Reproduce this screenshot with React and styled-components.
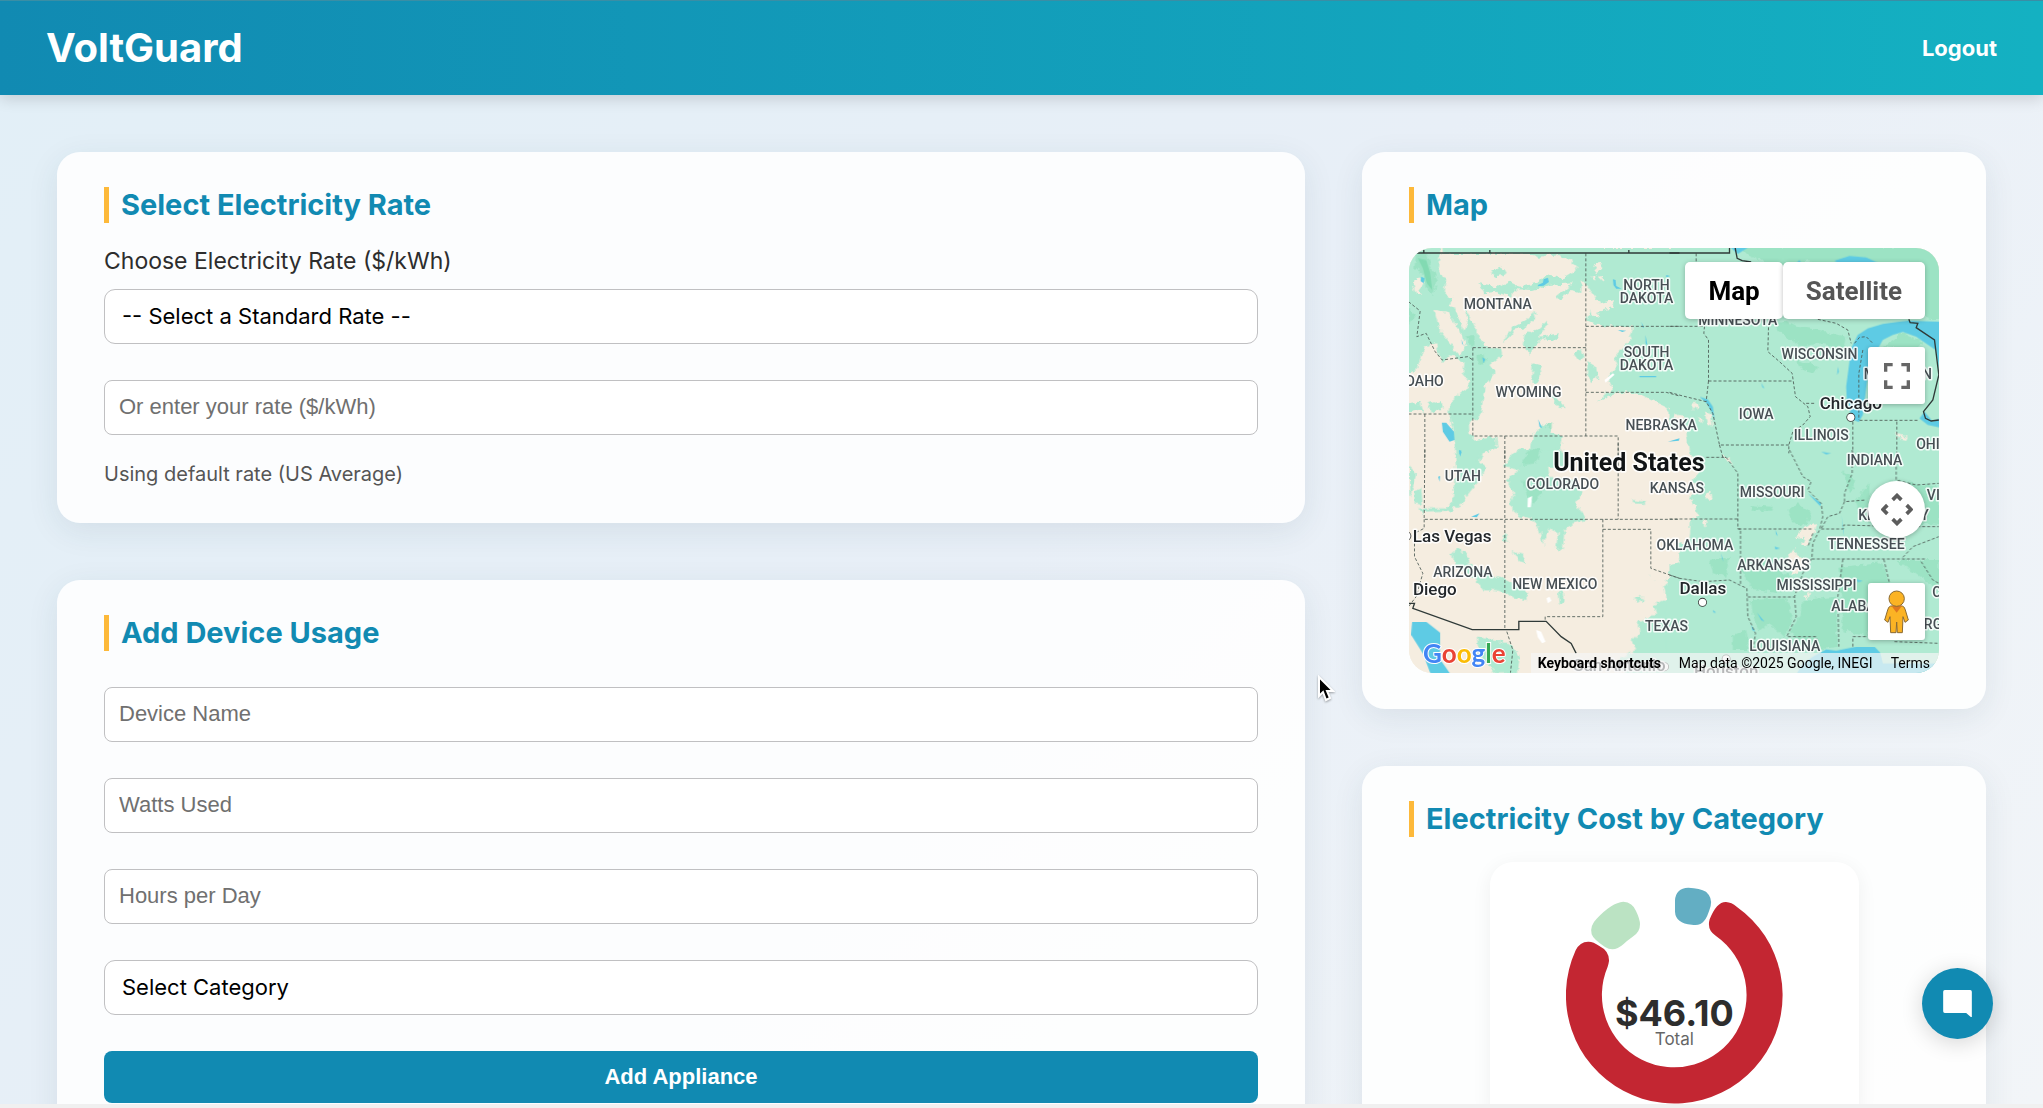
import React from 'react';
import styled, { createGlobalStyle, css } from 'styled-components';

const BLUE = '#118ab2';
const YELLOW = '#fdb93a';

const GlobalStyle = createGlobalStyle`
  * {
    box-sizing: border-box;
  }
  body {
    margin: 0;
    color: #2d2d2d;
    font-family: Inter, sans-serif;
  }
  h1, h2, p {
    margin: 0;
  }
`;

const Page = styled.div`
  display: flex;
  flex-direction: column;
  height: 100vh;
  overflow: hidden;
  border-bottom: 4px solid #f0f0f0;
  background: linear-gradient(135deg, #e2eff7 0%, #e8eff7 50%, #f2f5f8 100%);
`;

const Header = styled.header`
  display: flex;
  flex: none;
  align-items: center;
  justify-content: space-between;
  height: 95px;
  padding: 0 46px;
  border-top: 1px solid #3a8ea5;
  background: linear-gradient(90deg, ${BLUE}, #14b1c2);
  box-shadow: 0 4px 14px rgba(0, 0, 0, 0.14);
  color: #fff;
`;

const Logo = styled.h1`
  font-size: 40px;
  font-weight: 700;
  line-height: 50px;
`;

const LogoutLink = styled.a`
  color: #fff;
  font-size: 22px;
  font-weight: 700;
  text-decoration: none;
`;

const Dashboard = styled.main`
  display: grid;
  flex: 1;
  grid-template-columns: minmax(0, 2fr) minmax(0, 1fr);
  gap: 57px;
  min-height: 0;
  padding: 57px;
`;

const Column = styled.div`
  display: flex;
  flex-direction: column;
  gap: 57px;
`;

const Card = styled.section`
  flex: none;
  padding: 35px 47px 36px;
  border-radius: 23px;
  background: rgba(255, 255, 255, 0.87);
  box-shadow: 0 8px 32px rgba(30, 70, 80, 0.09);
`;

const CardTitle = styled.h2`
  margin-bottom: 25px;
  padding-left: 12px;
  border-left: 5px solid ${YELLOW};
  color: ${BLUE};
  font-size: 29px;
  font-weight: 700;
  line-height: 36px;
`;

const Label = styled.label`
  display: block;
  margin-bottom: 14px;
  font-size: 23px;
  line-height: 27px;
`;

const field = css`
  display: block;
  width: 100%;
  height: 55px;
  border: 1px solid #c0c0c2;
  background: #fff;
  font-size: 22px;
`;

const Input = styled.input`
  ${field}
  padding: 0 14px 2px;
  border-radius: 8px;
  font-family: "Liberation Sans", Arial, sans-serif;

  &::placeholder {
    color: #707070;
  }
`;

const Select = styled.select`
  ${field}
  padding: 0 17px 2px;
  border-radius: 11px;
  color: #000;
  font-family: Inter, sans-serif;
  appearance: none;
`;

const Fields = styled.div`
  display: flex;
  flex-direction: column;
  gap: 36px;
`;

const Form = styled.form`
  display: flex;
  flex-direction: column;
  gap: 36px;
  padding-top: 11px;
`;

const Hint = styled.p`
  margin-top: 26px;
  color: #555;
  font-size: 20px;
  line-height: 26px;
`;

const SubmitButton = styled.button`
  height: 52px;
  border: 0;
  border-radius: 8px;
  background: ${BLUE};
  color: #fff;
  font-family: "Liberation Sans", Arial, sans-serif;
  font-size: 22px;
  font-weight: 700;
`;

const MapFrame = styled.div`
  position: relative;
  height: 425px;
  overflow: hidden;
  border-radius: 23px;
  background: #f5ede0;
  font-family: Roboto, sans-serif;
`;

const MapDrawing = styled.svg`
  display: block;
  width: 100%;
  height: 100%;
`;

const MapTypes = styled.div`
  position: absolute;
  top: 14px;
  right: 14px;
  display: flex;
`;

const MapTypeButton = styled.button`
  height: 57px;
  padding: 0 23px;
  border: 0;
  border-radius: 5px;
  background: #fff;
  box-shadow: 0 1px 5px rgba(0, 0, 0, 0.25);
  color: ${props => (props.$active ? '#000' : '#565656')};
  font-family: Roboto, sans-serif;
  font-size: 26px;
  font-weight: 700;
`;

const MapControl = styled.button`
  position: absolute;
  top: ${props => props.$top}px;
  right: 14px;
  display: flex;
  align-items: center;
  justify-content: center;
  width: 57px;
  height: 57px;
  padding: 0;
  border: 0;
  border-radius: ${props => (props.$round ? '50%' : '3px')};
  background: #fff;
  box-shadow: 0 1px 5px rgba(0, 0, 0, 0.28);
`;

const GoogleLogo = styled.a`
  position: absolute;
  bottom: 3px;
  left: 14px;
  font-family: Lato, sans-serif;
  font-size: 26px;
  font-weight: 700;
  line-height: 33px;
  text-decoration: none;
  -webkit-text-stroke: 2px #fff;
  paint-order: stroke fill;
`;

const Letter = styled.span`
  color: ${props => props.$color};
`;

const Attribution = styled.div`
  position: absolute;
  right: 0;
  bottom: 0;
  display: flex;
  gap: 18px;
  height: 20px;
  padding: 0 9px 0 7px;
  background: rgba(245, 245, 245, 0.7);
  color: #000;
  font-size: 14px;
  line-height: 20px;
  white-space: nowrap;
`;

const ShortcutsButton = styled.button`
  padding: 0;
  border: 0;
  background: none;
  color: #000;
  font-family: Roboto, sans-serif;
  font-size: 14px;
  font-weight: 700;
`;

const TermsLink = styled.a`
  color: #000;
  text-decoration: none;
`;

const ChartCard = styled.div`
  display: flex;
  justify-content: center;
  width: 369px;
  max-width: 100%;
  margin: 0 auto;
  padding: 25px;
  border-radius: 23px;
  background: #fff;
  box-shadow: 0 4px 20px rgba(0, 0, 0, 0.06);
`;

const ChatButton = styled.button`
  position: fixed;
  right: 50px;
  bottom: 69px;
  display: flex;
  align-items: center;
  justify-content: center;
  width: 71px;
  height: 71px;
  padding: 0;
  border: 0;
  border-radius: 50%;
  background: ${BLUE};
  box-shadow: 0 4px 22px rgba(0, 0, 0, 0.16);
`;

const Pointer = styled.svg`
  position: fixed;
  top: 675px;
  left: 1317px;
  filter: drop-shadow(0 1px 1px rgba(0, 0, 0, 0.35));
  pointer-events: none;
`;

// The map is drawn in four tiles, each with its own origin
const NW = 'translate(-27 -24)';
const NE = 'translate(783 -24)';
const SW = 'translate(-27 606)';
const SE = 'translate(783 606)';

const FOREST = '#b0ead2';
const WOODS = '#99e2c2';
const DESERT = '#f5ede0';
const WATER = '#5ecbe4';

const LAND = [
  {
    tile: NW,
    fill: FOREST,
    paths: [
      'M0 0H128L115 85 140 125 135 165 160 175 150 195 195 205 212 230 240 290 260 322 305 330 308 345 270 375 288 400 255 440 245 520 225 540 208 545 210 580 230 600 290 590 295 625 250 640 235 690H170L165 600 150 520 155 480 205 440 215 420 190 405 195 370 150 345 130 370 110 310 75 320 50 390 0 410Z',
      'M128 0H580V38L500 60 480 42 420 50 400 42 130 42Z',
      'M515 24H860V560L800 500 720 462 660 455 595 485 640 445 625 415 655 380 645 350 690 300 700 262 600 258 560 240 575 200 600 190 570 150 545 110 515 60Z',
      'M275 95L300 80 318 90 310 108 285 112Z',
      'M240 130L300 140 330 125 360 140 410 130 440 105 490 115 530 90 535 70 550 90 545 160 520 150 480 180 470 170 520 130 450 135 400 150 350 148 330 170 290 155 255 160Z',
      'M310 310L340 260 380 240 405 215 410 235 370 265 345 270 330 290Z',
      'M370 310L375 285 420 265 445 240 440 262 420 290 480 280 475 300 430 295 400 325 392 345Z',
      'M400 370L420 375 425 395 410 430 395 425Z',
      'M445 460L465 465 495 500 480 505Z',
      'M523 340L545 330 555 350 540 362Z',
      'M565 365L590 380 595 410 575 430 562 410Z',
      'M27 490L60 485 70 520 50 510 27 515ZM85 490L125 480 130 505 95 520Z',
      'M400 590L430 550 455 560 450 580 490 590 485 620 510 680H345L360 630 395 625Z',
    ],
  },
  {
    tile: NE,
    fill: FOREST,
    paths: ['M0 0H830V690H0Z'],
  },
  {
    tile: SW,
    fill: FOREST,
    paths: [
      'M178 -10H255L230 30 260 50 240 90 200 140 190 160 150 185 70 188 55 175 140 175 160 150 165 90 185 60Z',
      'M27 50L50 70 45 100 30 140ZM45 125L65 115 70 165 45 160Z',
      'M350 0H480L445 40 450 80 520 90 550 130 530 160 560 210 520 220 495 240 490 300 470 295 475 250 450 235 430 285 420 240 400 210 350 195 330 160 345 130 320 90 360 60 310 50Z',
      'M155 310L175 295 210 320 205 340 280 375 380 415 385 450 350 445 300 425 250 420 230 390 170 350Z',
      'M340 305L370 315 380 340 355 330ZM305 270L315 248 330 275Z',
      'M475 430L490 420 492 455 478 462Z',
      'M232 560L280 570 330 580 360 620 355 670H290L240 620Z',
      'M695 150L740 155 735 162 700 160Z',
      'M870 380L830 390 790 410 800 450 760 465 770 490 715 520 720 550 700 570 710 600 640 640 700 690H870Z',
      'M750 375L765 370 760 390ZM705 440L735 445 715 460Z',
    ],
  },
  {
    tile: SE,
    fill: FOREST,
    paths: ['M-10 -10H830V690H-10Z'],
  },
  {
    tile: NE,
    fill: DESERT,
    paths: [
      'M-10 625L30 620 70 650 100 690H-10Z',
      'M62 495L85 490 90 500 72 508ZM110 515L125 520 130 560 115 555ZM85 530L100 540 95 550ZM15 520L40 528 35 545 10 535Z',
      'M675 578L690 585 715 590 710 600 685 592Z',
      'M-60 545L0 570 10 600-60 600Z',
    ],
  },
  {
    tile: SE,
    fill: DESERT,
    paths: [
      'M-60-60H50L60 10 95 60 70 90 90 120 60 140 90 200 65 205 60 270 25 280 30 340 0 345 0 380-60 390Z',
      'M110 130L125 125 128 145 112 150ZM100 210L115 215 105 230Z',
      'M380 265L390 240 440 218 435 245 410 290 398 285 405 260Z',
      'M350 330L375 290 385 320 405 325 420 345 370 375 360 350ZM405 440L420 420 415 445Z',
      'M160 15L180 25 190 45 175 35Z',
    ],
  },
  {
    tile: NW,
    fill: DESERT,
    paths: [
      'M40 130L60 115 75 130 60 150 70 165 50 165ZM105 210L145 215 155 235 180 270 200 320 180 345 160 320 120 270Z',
      'M160 190L185 180 205 240 195 270 180 240Z',
      'M580 75L600 65 608 85 590 97ZM575 110L590 105 590 122ZM598 110L612 108 610 122ZM570 195L600 190 640 180 640 205 590 215 600 235 575 225Z',
    ],
  },
];

const WOODLAND = [
  { tile: NW, d: 'M50 40L85 38 95 80 115 120 100 165 80 150 70 100 45 80ZM27 205L50 225 27 255ZM200 290L225 285 225 320 210 315ZM230 350L255 340 260 370 240 375ZM440 555L458 550 455 565Z' },
  { tile: NE, d: 'M190 20H820V240H780L740 200 640 130 560 100 480 110 420 60 330 80 260 55Z' },
  { tile: NE, d: 'M310 250L350 245 380 260 450 270 530 290 520 325 450 310 400 320 340 285ZM370 350L400 365 445 380 440 400 400 390Z' },
  { tile: NE, d: 'M640 320L700 280 760 310 720 330Z' },
  { tile: SE, d: 'M355 180L385 160 425 190 410 225 370 220ZM240 165L310 170 305 182 250 182Z' },
  { tile: SE, d: 'M220 330L300 340 370 385 330 430 250 420 220 370ZM245 450L350 445 370 500 345 560 300 520 270 545 250 500ZM400 450L500 440 505 590 440 600 360 550 390 500Z' },
  { tile: SE, d: 'M510 350L640 340 660 400 590 560 520 540ZM600 100L560 150 570 210 600 215ZM660 90L810 110V225L720 220ZM680 330H810V420L750 380ZM520 60L560 90 540 130ZM120 330L180 320 170 380 130 370ZM190 560L230 540 240 600 190 600Z' },
  { tile: SW, d: 'M365 45L410 40 425 0 385 0ZM370 90L400 110 420 80 430 130 400 160 380 130Z' },
];

const LAKES = [
  { tile: NW, d: 'M127 548L140 548 163 575 165 600 150 605 130 575Z' },
  { tile: NW, d: 'M415 135L430 128 432 118 445 113 448 126 432 137 416 139ZM65 110L75 115 72 130 64 124ZM640 118L648 120 650 138 666 146 650 146 642 136ZM248 352L257 358 252 370ZM416 538L428 565 420 560ZM178 630L186 636 182 650ZM720 408H770V412H720ZM725 245L733 262 730 264ZM738 285L744 318 738 310ZM655 270L680 272 668 276ZM800 105L812 108 800 112ZM186 298L192 318 187 310ZM805 605L840 595 838 602Z' },
  { tile: NE, d: 'M545 325L565 285 595 265 640 252 690 245 718 242 810 245V390L798 330 740 290 700 276 670 285 640 300 615 345 600 380 592 430 580 525 568 546 548 538 532 480 530 440 538 380Z' },
  { tile: NE, d: 'M495 62L540 48 590 52 640 75 600 82 520 80ZM180 20H240L205 42ZM750 535L765 515 790 545 810 535V562L775 555ZM375 75L390 60 400 80Z' },
  { tile: NE, d: 'M90 470L115 478 130 500 135 540 126 515 112 490ZM505 380L508 395 503 405ZM455 635L485 640 470 643ZM275 428L285 445 279 442ZM540 655L555 640 550 660Z' },
  { tile: SW, d: 'M38 515L80 515 122 548V590L120 625 165 690H100L70 610 35 555Z' },
  { tile: SW, d: 'M215 200L240 190 232 202ZM116 80L122 78 120 95ZM180 0L186 2 180 15Z' },
  { tile: SE, d: 'M430 620L470 598 500 602 560 590 615 590 632 608 640 640 810 640V690H370L400 640Z' },
  { tile: SE, d: 'M415 130L455 160 452 168ZM516 195L524 260 520 240ZM155 310L162 335 157 325ZM262 488L285 515 275 510ZM245 525L257 545 248 540ZM130 480L140 488 132 488ZM315 290L332 295 318 298ZM620 430L632 450 624 445ZM560 388L580 393 565 396ZM318 240L325 258 319 252Z' },
];

const STATE_LINES = [
  { tile: NW, d: 'M27 185L62 213 52 290 80 280 107 335 128 360 205 350 220 360M220 323H559M220 323V588H656V690M559 40V588M559 259H840M559 457H800L840 468M27 522H220M76 522V660M316 588V660' },
  { tile: NE, d: 'M0 259H105L103 280 117 300V423M117 423H368M117 423L110 485M80 40V70M297 262L295 335 330 365 368 400 378 470 415 500 422 530 400 555 370 575 358 615V640M0 457L40 468 110 485 130 520 150 615H358M150 615L160 652H170M445 238L500 250 535 270 545 310M410 490H440M555 310L570 292 590 290 610 310M580 330L568 400V540M570 541H750M550 545V640M682 545V640' },
  { tile: SW, d: 'M76 0L74 208H840M656-20V208M316 0V538M610 208V500H437V515M610 238H754V355L840 385M74 208V235L45 250V320L70 370 50 440 27 470V510M322 545L340 600 333 668' },
  { tile: SE, d: 'M110 22H170L205 70V237H213V405M0 207H205M207 237H430M360 0L400 80 425 95 415 120 455 160 460 200 450 240 430 280 427 325 400 370 375 440 380 500 352 560H440L445 580M0 375L30 385 100 395 180 390 210 405 232 415 235 500 258 550 250 600M235 441H375M427 327H770M455 237H522V225L700 230H808M520 328L505 440 508 590M643 328L660 400M755 335L790 390 808 400M550 590V560H595M675 575L808 580M700 322L730 290 808 260M548 0V70L525 130V155L590 150M680 20V90L740 105 808 100M525 155L510 190 475 200 455 237M430 250L415 290' },
];

const BORDERS = [
  { tile: NW, d: 'M45 39H840M73 30V39M271 30V39M688 30V39' },
  { tile: NE, d: 'M0 39H180V24M197 24L203 55 218 62 245 66M718 238L722 248 745 250 740 263 795 300 808 405 790 480 762 515 768 535 785 543 808 540' },
  { tile: SW, d: 'M27 460H45L40 475 218 539H358V514H440L485 560 515 580 530 610' },
];

const LABELS = [
  { tile: NW, x: 295, y: 206, text: 'MONTANA' },
  { tile: NW, x: 741, y: 149, text: 'NORTH' },
  { tile: NW, x: 741, y: 188, text: 'DAKOTA' },
  { tile: NW, x: 741, y: 351, text: 'SOUTH' },
  { tile: NW, x: 741, y: 390, text: 'DAKOTA' },
  { tile: NW, x: 70, y: 439, text: 'IDAHO' },
  { tile: NW, x: 387, y: 471, text: 'WYOMING' },
  { tile: NW, x: 785, y: 570, text: 'NEBRASKA' },
  { tile: NE, x: 205, y: 255, text: 'MINNESOTA' },
  { tile: NE, x: 450, y: 356, text: 'WISCONSIN' },
  { tile: NE, x: 685, y: 417, text: 'MICHIGAN' },
  { tile: NE, x: 260, y: 537, text: 'IOWA' },
  { tile: NE, x: 455, y: 600, text: 'ILLINOIS' },
  { tile: NE, x: 790, y: 626, text: 'OHIO' },
  { tile: SE, x: 615, y: 46, text: 'INDIANA' },
  { tile: SE, x: 308, y: 141, text: 'MISSOURI' },
  { tile: SE, x: 22, y: 129, text: 'KANSAS' },
  { tile: SW, x: 490, y: 118, text: 'COLORADO' },
  { tile: SW, x: 190, y: 93, text: 'UTAH' },
  { tile: SE, x: 76, y: 299, text: 'OKLAHOMA' },
  { tile: SW, x: 190, y: 381, text: 'ARIZONA' },
  { tile: SW, x: 466, y: 417, text: 'NEW MEXICO' },
  { tile: SW, x: 801, y: 543, text: 'TEXAS' },
  { tile: SE, x: 672, y: 211, text: 'KENTUCKY' },
  { tile: SE, x: 860, y: 150, text: 'VIRGINIA' },
  { tile: SE, x: 590, y: 298, text: 'TENNESSEE' },
  { tile: SE, x: 312, y: 359, text: 'ARKANSAS' },
  { tile: SE, x: 441, y: 420, text: 'MISSISSIPPI' },
  { tile: SE, x: 584, y: 484, text: 'ALABAMA' },
  { tile: SE, x: 770, y: 536, text: 'GEORGIA' },
  { tile: SE, x: 890, y: 441, text: 'CAROLINA' },
  { tile: SE, x: 346, y: 604, text: 'LOUISIANA' },
];

const CITIES = [
  { tile: NE, x: 544, y: 508, dotX: 544, dotY: 532, text: 'Chicago' },
  { tile: SW, x: 158, y: 275, dotX: 22, dotY: 258, text: 'Las Vegas' },
  { tile: SW, x: 106, y: 434, dotX: -20, dotY: 450, text: 'Diego' },
  { tile: SE, x: 100, y: 433, dotX: 99, dotY: 457, text: 'Dallas' },
  { tile: SW, x: 660, y: 664, dotX: 795, dotY: 650, text: 'San Antonio' },
  { tile: SE, x: 170, y: 680, dotX: 170, dotY: 627, text: 'Houston' },
];

const GOOGLE = [
  ['G', '#4285f4'],
  ['o', '#ea4335'],
  ['o', '#fbbc05'],
  ['g', '#4285f4'],
  ['l', '#34a853'],
  ['e', '#ea4335'],
];

const Terrain = () => (
  <MapDrawing viewBox="0 0 1593 1275" preserveAspectRatio="xMidYMid slice" role="img" aria-label="Map of the United States">
    <defs>
      <filter id="coast" x="-5%" y="-5%" width="110%" height="110%">
        <feTurbulence type="fractalNoise" baseFrequency="0.06" numOctaves="2" seed="4" />
        <feDisplacementMap in="SourceGraphic" scale="20" xChannelSelector="R" yChannelSelector="G" />
      </filter>
    </defs>
    <rect width="1593" height="1275" fill={DESERT} />
    <g filter="url(#coast)">
      {LAND.map((area, i) => (
        <g key={i} transform={area.tile} fill={area.fill}>
          {area.paths.map(d => <path key={d} d={d} />)}
        </g>
      ))}
      {WOODLAND.map(w => <path key={w.d} transform={w.tile} d={w.d} fill={WOODS} opacity="0.85" />)}
    </g>
    <path transform={NW} d="M55 55L80 60 92 100 98 150 82 130 70 85Z" fill="#82dab2" />
    {LAKES.map(l => <path key={l.d} transform={l.tile} d={l.d} fill={WATER} />)}
    <g fill="#fff">
      <path transform={NW} d="M615 420L640 400 645 404 618 428Z" />
      <path transform={SW} d="M410 540L425 545 438 575 428 580 415 562ZM385 145L398 138 394 172 384 172ZM441 445L450 440 456 452 445 460Z" />
    </g>
    {STATE_LINES.map(s => (
      <path key={s.d} transform={s.tile} d={s.d} fill="none" stroke="#4c5a55" strokeWidth="3" strokeDasharray="9 6" opacity="0.85" />
    ))}
    {BORDERS.map(b => (
      <path key={b.d} transform={b.tile} d={b.d} fill="none" stroke="#2f3a38" strokeWidth="4" />
    ))}
    <g textAnchor="middle" fontFamily="Roboto, sans-serif" fontWeight="500" paintOrder="stroke" stroke="#fff" strokeOpacity="0.85" strokeLinejoin="round">
      <g fontSize="42" fill="#474f54" strokeWidth="9">
        {LABELS.map(l => <text key={l.text + l.y} transform={l.tile} x={l.x} y={l.y}>{l.text}</text>)}
      </g>
      <g fontSize="51" fill="#23272b" strokeWidth="9">
        {CITIES.map(c => (
          <g key={c.text} transform={c.tile}>
            <circle cx={c.dotX} cy={c.dotY} r="11" fill="#fff" stroke="#333" strokeOpacity="1" strokeWidth="5" />
            <text x={c.x} y={c.y}>{c.text}</text>
          </g>
        ))}
      </g>
      <text x="661" y="668" fontSize="75" fontWeight="700" fill="#111416" strokeWidth="10">United States</text>
    </g>
  </MapDrawing>
);

const FullscreenIcon = () => (
  <svg width="26" height="26" viewBox="0 0 78 78" fill="none" stroke="#666" strokeWidth="10">
    <path d="M5 26V5H26M52 5H73V26M73 52V73H52M26 73H5V52" />
  </svg>
);

const PanIcon = () => (
  <svg width="32" height="33" viewBox="0 0 96 98" fill="none" stroke="#5c5c5c" strokeWidth="11">
    <path d="M35 20L48 7 61 20M35 78L48 91 61 78M19 36L6 49 19 62M77 36L90 49 77 62" />
  </svg>
);

const Pegman = () => (
  <svg width="25" height="44" viewBox="0 0 75 132" fill="#fbb324" stroke="#8a6a33" strokeWidth="3">
    <path d="M20 48H55Q62 50 64 60L73 90 63 97 57 80 55 128H40L38 96 36 128H20L18 80 12 97 2 90 11 60Q13 50 20 48Z" />
    <path d="M22 47H54L38 68Z" fill="#e0781f" stroke="none" />
    <circle cx="38" cy="26" r="23" />
  </svg>
);

const CostChart = () => (
  <svg width="217" height="217" viewBox="78 48 651 651" role="img" aria-label="Electricity cost by category">
    <path fill="#c32632" d="M558 93Q575 94 590 107A325 325 0 1 1 107 238Q120 211 146 212Q160 212 178 225Q208 240 207 270Q206 278 203 287A217 217 0 1 0 527 194Q500 176 509 145Q530 92 558 93Z" />
    <path fill="#63aec3" d="M405 88Q407 52 445 50Q480 52 498 62Q518 80 512 105Q502 140 492 150Q480 166 455 161Q407 157 405 122Z" />
    <path fill="#bbe3c3" d="M250 92Q278 94 288 120Q300 145 300 160Q300 185 278 197Q262 208 250 220Q222 245 195 228Q160 205 155 190Q148 165 170 143Q215 95 250 92Z" />
    <g textAnchor="middle" fontFamily="Inter, sans-serif">
      <text x="403" y="465" fontSize="108" fontWeight="700" fill="#2d2d2d">$46.10</text>
      <text x="403" y="522" fontSize="51" fill="#666">Total</text>
    </g>
  </svg>
);

const RateCard = () => (
  <Card>
    <CardTitle>Select Electricity Rate</CardTitle>
    <Label htmlFor="rate">Choose Electricity Rate ($/kWh)</Label>
    <Fields>
      <Select id="rate" defaultValue="">
        <option value="">-- Select a Standard Rate --</option>
      </Select>
      <Input type="text" aria-label="Your rate" placeholder="Or enter your rate ($/kWh)" />
    </Fields>
    <Hint>Using default rate (US Average)</Hint>
  </Card>
);

const DeviceCard = () => (
  <Card>
    <CardTitle>Add Device Usage</CardTitle>
    <Form onSubmit={event => event.preventDefault()}>
      <Input type="text" aria-label="Device Name" placeholder="Device Name" />
      <Input type="text" aria-label="Watts Used" placeholder="Watts Used" />
      <Input type="text" aria-label="Hours per Day" placeholder="Hours per Day" />
      <Select aria-label="Category" defaultValue="">
        <option value="">Select Category</option>
      </Select>
      <SubmitButton type="submit">Add Appliance</SubmitButton>
    </Form>
  </Card>
);

const MapCard = () => (
  <Card>
    <CardTitle>Map</CardTitle>
    <MapFrame>
      <Terrain />
      <MapTypes>
        <MapTypeButton $active>Map</MapTypeButton>
        <MapTypeButton>Satellite</MapTypeButton>
      </MapTypes>
      <MapControl $top={99} aria-label="Toggle fullscreen"><FullscreenIcon /></MapControl>
      <MapControl $top={233} $round aria-label="Map camera controls"><PanIcon /></MapControl>
      <MapControl $top={335} aria-label="Street View"><Pegman /></MapControl>
      <GoogleLogo href="#google">
        {GOOGLE.map(([letter, color], i) => <Letter key={i} $color={color}>{letter}</Letter>)}
      </GoogleLogo>
      <Attribution>
        <ShortcutsButton>Keyboard shortcuts</ShortcutsButton>
        <span>Map data ©2025 Google, INEGI</span>
        <TermsLink href="#terms">Terms</TermsLink>
      </Attribution>
    </MapFrame>
  </Card>
);

const CostCard = () => (
  <Card>
    <CardTitle>Electricity Cost by Category</CardTitle>
    <ChartCard>
      <CostChart />
    </ChartCard>
  </Card>
);

export default function App() {
  return (
    <>
      <GlobalStyle />
      <Page>
        <Header>
          <Logo>VoltGuard</Logo>
          <LogoutLink href="#logout">Logout</LogoutLink>
        </Header>
        <Dashboard>
          <Column>
            <RateCard />
            <DeviceCard />
          </Column>
          <Column>
            <MapCard />
            <CostCard />
          </Column>
        </Dashboard>
        <ChatButton aria-label="Open chat">
          <svg width="29" height="27" viewBox="0 0 86 81" fill="#fff">
            <path d="M5 0H81Q86 0 86 5V81H83L69 69H5Q0 69 0 64V5Q0 0 5 0Z" />
          </svg>
        </ChatButton>
        <Pointer width="18" height="27" viewBox="0 0 18 27">
          <path d="M2 2V21L6 17 9 25 13 23 10 16H16Z" fill="#000" stroke="#fff" strokeWidth="2" />
        </Pointer>
      </Page>
    </>
  );
}
